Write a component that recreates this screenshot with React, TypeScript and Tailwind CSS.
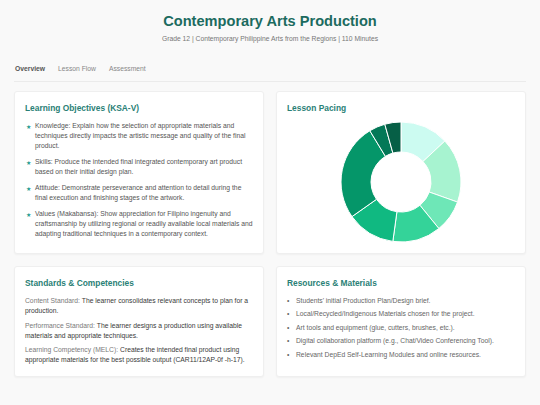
import React from 'react'

const objectives = [
  'Knowledge: Explain how the selection of appropriate materials and techniques directly impacts the artistic message and quality of the final product.',
  'Skills: Produce the intended final integrated contemporary art product based on their initial design plan.',
  'Attitude: Demonstrate perseverance and attention to detail during the final execution and finishing stages of the artwork.',
  'Values (Makabansa): Show appreciation for Filipino ingenuity and craftsmanship by utilizing regional or readily available local materials and adapting traditional techniques in a contemporary context.',
]

const standards = [
  {
    label: 'Content Standard:',
    text: 'The learner consolidates relevant concepts to plan for a production.',
  },
  {
    label: 'Performance Standard:',
    text: 'The learner designs a production using available materials and appropriate techniques.',
  },
  {
    label: 'Learning Competency (MELC):',
    text: 'Creates the intended final product using appropriate materials for the best possible output (CAR11/12AP-0f -h-17).',
  },
]

const resources = [
  "Students' initial Production Plan/Design brief.",
  'Local/Recycled/Indigenous Materials chosen for the project.',
  'Art tools and equipment (glue, cutters, brushes, etc.).',
  'Digital collaboration platform (e.g., Chat/Video Conferencing Tool).',
  'Relevant DepEd Self-Learning Modules and online resources.',
]

// minutes per lesson phase
const pacing = [
  { value: 15, color: '#ccfbf1' },
  { value: 20, color: '#a7f3d0' },
  { value: 10, color: '#6ee7b7' },
  { value: 15, color: '#34d399' },
  { value: 15, color: '#10b981' },
  { value: 30, color: '#059669' },
  { value: 5, color: '#047857' },
  { value: 5, color: '#065f46' },
]

function arcPath(cx: number, cy: number, r: number, ir: number, a0: number, a1: number) {
  const pt = (rad: number, a: number) => {
    const t = ((a - 90) * Math.PI) / 180
    return [cx + rad * Math.cos(t), cy + rad * Math.sin(t)]
  }
  const large = a1 - a0 > 180 ? 1 : 0
  const [x0, y0] = pt(r, a0)
  const [x1, y1] = pt(r, a1)
  const [x2, y2] = pt(ir, a1)
  const [x3, y3] = pt(ir, a0)
  return `M${x0} ${y0} A${r} ${r} 0 ${large} 1 ${x1} ${y1} L${x2} ${y2} A${ir} ${ir} 0 ${large} 0 ${x3} ${y3} Z`
}

function Donut() {
  const total = pacing.reduce((s, p) => s + p.value, 0)
  let acc = 0
  return (
    <svg width="122" height="122" viewBox="0 0 122 122">
      {pacing.map((p, i) => {
        const a0 = (acc / total) * 360
        acc += p.value
        const a1 = (acc / total) * 360
        return (
          <path
            key={i}
            d={arcPath(61, 61, 60, 30, a0, a1)}
            fill={p.color}
            stroke="#ffffff"
            strokeWidth="1"
          />
        )
      })}
    </svg>
  )
}

function Card({ title, children }: { title: string; children: React.ReactNode }) {
  return (
    <div className="bg-white rounded-[3px] border border-[#efefef] shadow-[0_1px_2px_rgba(0,0,0,0.04)] p-[10px]">
      <h2 className="text-[8.4px] leading-[13px] font-bold text-[#2a7f76] mb-[6px]">{title}</h2>
      {children}
    </div>
  )
}

export default function App() {
  return (
    <div className="min-h-screen bg-[#f9f9f9] px-[14px] font-['Liberation_Sans',Arial,sans-serif]">
      {/* header */}
      <div className="pt-[12px] text-center">
        <h1 className="text-[14.6px] leading-[18px] font-bold text-[#1c6b5f]">
          Contemporary Arts Production
        </h1>
        <p className="mt-[4px] text-[6.75px] leading-[10px] text-[#777]">
          Grade 12 | Contemporary Philippine Arts from the Regions | 110 Minutes
        </p>
      </div>

      {/* tabs */}
      <div className="mt-[20px] flex gap-[13px] border-b border-[#ebebeb] pb-[7px] text-[6.75px] leading-[10px]">
        <span className="pl-[1px] font-bold text-[#555]">Overview</span>
        <span className="text-[#888]">Lesson Flow</span>
        <span className="text-[#888]">Assessment</span>
      </div>

      <div className="mt-[9px] grid grid-cols-2 gap-[12px]">
        <Card title="Learning Objectives (KSA-V)">
          <ul className="flex flex-col gap-[6px] mr-[-2px]">
            {objectives.map((o, i) => (
              <li key={i} className="flex text-[6.75px] leading-[10px] text-[#555]">
                <span className="w-[10px] shrink-0 pl-[1px] pt-[1px] text-[5.5px] text-[#2a9d8f]">★</span>
                <span>{o}</span>
              </li>
            ))}
          </ul>
        </Card>

        <Card title="Lesson Pacing">
          <div className="flex justify-center">
            <Donut />
          </div>
        </Card>

        <Card title="Standards & Competencies">
          <div className="flex flex-col gap-[4px]">
            {standards.map((s, i) => (
              <div key={i} className="text-[6.75px] leading-[10.3px] text-[#3a3a3a] pr-[4px]">
                <span className="text-[#7a7a7a] mr-[2px]">{s.label}</span>
                <span>{s.text}</span>
              </div>
            ))}
          </div>
        </Card>

        <Card title="Resources & Materials">
          <ul className="flex flex-col gap-[3.2px]">
            {resources.map((r, i) => (
              <li key={i} className="flex text-[6.75px] leading-[10.3px] text-[#666]">
                <span className="w-[9px] shrink-0 text-[#666]">•</span>
                <span>{r}</span>
              </li>
            ))}
          </ul>
        </Card>
      </div>
    </div>
  )
}
